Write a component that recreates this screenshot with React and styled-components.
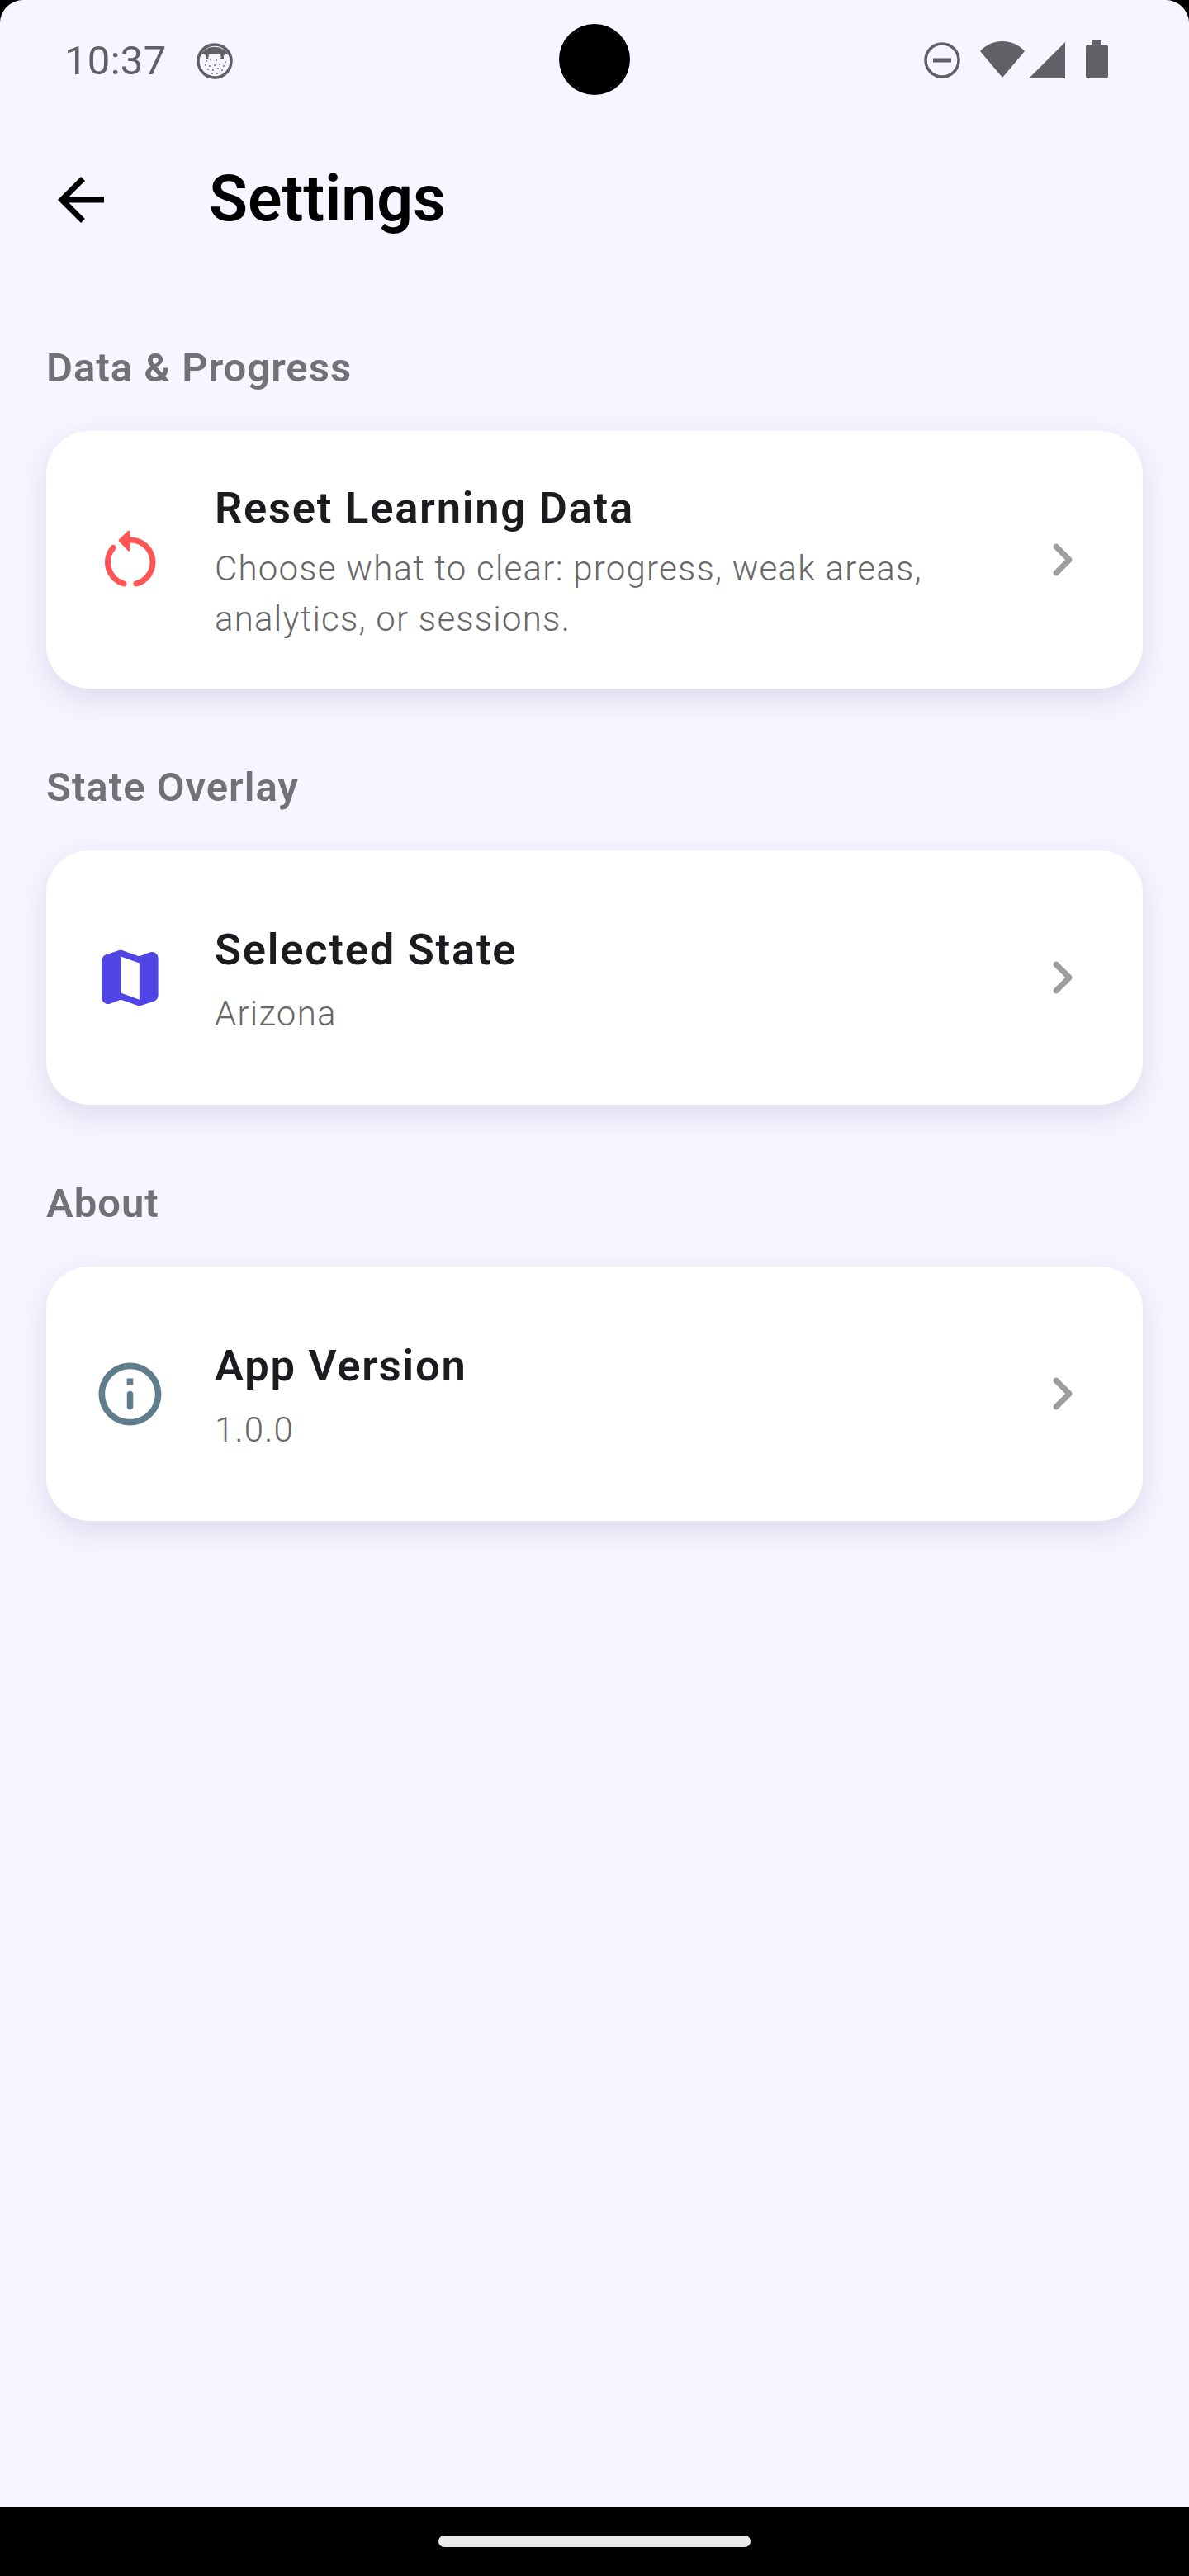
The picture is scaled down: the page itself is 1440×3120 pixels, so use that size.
import React from 'react';
import styled, { createGlobalStyle } from 'styled-components';

const Global = createGlobalStyle`
  html, body { margin: 0; padding: 0; background: #000; }
  * { box-sizing: border-box; }
`;

const Device = styled.div`
  width: 1440px; height: 3120px; background: #000; display: flex; flex-direction: column;
  font-family: Roboto, "Liberation Sans", sans-serif; overflow: hidden;
`;
const Screen = styled.div`
  flex: 1; background: #f7f5ff; border-radius: 28px 28px 0 0; display: flex; flex-direction: column;
`;
const StatusBar = styled.div`
  height: 144px; flex: none; padding: 0 78px; display: grid;
  grid-template-columns: 1fr 86px 1fr; align-items: start; color: #625f66;
`;
const StatusLeft = styled.div`
  display: flex; align-items: center; gap: 36px; height: 48px; margin-top: 50px;
`;
const Clock = styled.span`
  font-size: 49px; font-weight: 400; line-height: 48px; color: #625f66; letter-spacing: 0.3px;
`;
const Camera = styled.div`
  width: 86px; height: 86px; margin-top: 29px; border-radius: 50%; background: #000;
`;
const StatusRight = styled.div`
  display: flex; justify-content: flex-end; align-items: flex-start; margin: 49px 20px 0 0;
`;
const StatusGlyph = styled.svg`
  flex: none; margin-left: ${p => p.$ml || 0}px; margin-top: ${p => p.$mt || 0}px; fill: #625f66;
`;
const AppBar = styled.header`
  height: 196px; flex: none; display: flex; align-items: center; padding-left: 56px;
`;
const BackIcon = styled.svg`
  width: 84px; height: 84px; fill: #000; flex: none;
`;
const Title = styled.h1`
  margin: 0 0 2px 113px; font-size: 77px; font-weight: 600; color: #000; line-height: 90px;
`;
const Content = styled.main`
  flex: 1; padding: 78px 56px 0; display: flex; flex-direction: column; gap: 92px;
`;
const Section = styled.section`
  display: flex; flex-direction: column; gap: 48px;
`;
const SectionLabel = styled.h2`
  margin: 0; height: 56px; line-height: 56px; font-size: 49px; font-weight: 600; color: #727176; letter-spacing: 1px;
`;
const Card = styled.div`
  background: #fff; border-radius: 52px; height: ${p => p.$h}px; padding: 0 56px; display: flex; align-items: center;
  box-shadow: 0 12px 36px rgba(50, 50, 110, 0.13);
`;
const LeadIcon = styled.svg`
  width: 91px; height: 91px; flex: none; fill: ${p => p.$c};
`;
const Body = styled.div`
  flex: 1; min-width: 0; margin-left: 57px; padding-top: 8px; display: flex; flex-direction: column;
`;
const RowTitle = styled.div`
  font-size: 52.5px; font-weight: 600; color: #1c1b1f; letter-spacing: 1.75px; line-height: 62px;
`;
const RowSub = styled.div`
  font-size: 42px; font-weight: 300; color: #686868; line-height: 61px; margin-top: ${p => p.$gap}px; letter-spacing: 1.23px;
`;
const Chevron = styled.svg`
  width: 84px; height: 84px; flex: none; fill: #9e9e9e; margin-left: 28px;
`;
const NavBar = styled.div`
  height: 84px; flex: none; background: #000; display: flex; justify-content: center; padding-top: 35px;
`;
const Pill = styled.div`
  width: 378px; height: 14px; border-radius: 7px; background: #ebebeb;
`;

const Row = ({ h, gap, icon, color, title, sub }) => (
  <Card $h={h}>
    <LeadIcon $c={color} viewBox="0 0 91 91">{icon}</LeadIcon>
    <Body>
      <RowTitle>{title}</RowTitle>
      <RowSub $gap={gap}>{sub}</RowSub>
    </Body>
    <Chevron viewBox="0 0 24 24"><path d="M9.29 6.71c-.39.39-.39 1.02 0 1.41L13.17 12l-3.88 3.88c-.39.39-.39 1.02 0 1.41.39.39 1.02.39 1.41 0l4.59-4.59c.39-.39.39-1.02 0-1.41L10.7 6.7c-.38-.38-1.02-.38-1.41.01z"/></Chevron>
  </Card>
);

const ResetGlyph = (
  <g>
    <path d="M44 21 A27 27 0 0 1 53 74" fill="none" stroke="#ff5555" strokeWidth="7" strokeLinecap="round"/>
    <path d="M38 74 A27 27 0 0 1 25 30.5" fill="none" stroke="#ff5555" strokeWidth="7" strokeLinecap="round"/>
    <path d="M33 21.5 L44 11 L44 33 Z" fill="#ff5555" stroke="#ff5555" strokeWidth="3" strokeLinejoin="round"/>
  </g>
);
const MapGlyph = (
  <g transform="scale(3.7917)"><path fillRule="evenodd" d="M14.65 4.98l-5-1.75c-.42-.15-.88-.15-1.3-.01L4.36 4.56C3.55 4.84 3 5.6 3 6.46v11.85c0 1.41 1.41 2.37 2.72 1.86l2.93-1.14c.22-.09.47-.09.69-.01l5 1.75c.42.15.88.15 1.3.01l3.99-1.34c.81-.27 1.36-1.04 1.36-1.9V5.69c0-1.41-1.41-2.37-2.72-1.86l-2.93 1.14c-.22.08-.46.09-.69.01zM15 18.89l-6-2.11V5.11l6 2.11v11.67z"/></g>
);
const InfoGlyph = (
  <g transform="scale(3.7917)"><path d="M11 7h2v2h-2zm1 10c.55 0 1-.45 1-1v-4c0-.55-.45-1-1-1s-1 .45-1 1v4c0 .55.45 1 1 1zm0-15C6.48 2 2 6.48 2 12s4.48 10 10 10 10-4.48 10-10S17.52 2 12 2zm0 18c-4.41 0-8-3.59-8-8s3.59-8 8-8 8 3.59 8 8-3.59 8-8 8z"/></g>
);

const dots = [[12,22],[17,20],[24,21],[30,19],[35,23],[11,27],[16,28],[22,27],[28,26],[33,28],[14,32],[20,33],[26,31],[31,33],[19,37],[25,37]];

export default function App() {
  return (
    <Device>
      <Global />
      <Screen>
        <StatusBar>
          <StatusLeft>
            <Clock>10:37</Clock>
            <svg width="44" height="44" viewBox="0 0 44 44">
              <circle cx="22" cy="22" r="20" fill="#f7f5ff" stroke="#625f66" strokeWidth="3.5"/>
              <path d="M4 16 A20 20 0 0 1 40 16 L36 13 L33 15 L33 20 L30 20 L29 14 H15 L14 20 L11 20 L11 15 L8 13 Z" fill="#625f66"/>
              {dots.map(([x, y], i) => <circle key={i} cx={x} cy={y} r="0.9" fill="#625f66"/>)}
            </svg>
          </StatusLeft>
          <Camera />
          <StatusRight>
            <StatusGlyph width="44" height="46" viewBox="0 0 44 46" $mt={2}>
              <circle cx="22" cy="22" r="20" fill="none" stroke="#625f66" strokeWidth="3.5"/>
              <rect x="11" y="19.5" width="22" height="5"/>
            </StatusGlyph>
            <StatusGlyph width="54" height="46" viewBox="0 0 54 46" $ml={24} $mt={1}>
              <path d="M0 12 C14 -4 40 -4 54 12 L27 44 Z"/>
            </StatusGlyph>
            <StatusGlyph width="44" height="46" viewBox="0 0 44 46" $ml={5} $mt={2}>
              <path d="M44 0 V44 H0 Z"/>
            </StatusGlyph>
            <StatusGlyph width="27" height="46" viewBox="0 0 27 46" $ml={25}>
              <path d="M8 0 H19 V5 H24 A3 3 0 0 1 27 8 V43 A3 3 0 0 1 24 46 H3 A3 3 0 0 1 0 43 V8 A3 3 0 0 1 3 5 H8 Z"/>
            </StatusGlyph>
          </StatusRight>
        </StatusBar>
        <AppBar>
          <BackIcon viewBox="0 0 24 24"><path d="M20 11H7.83l5.59-5.59L12 4l-8 8 8 8 1.41-1.41L7.83 13H20v-2z"/></BackIcon>
          <Title>Settings</Title>
        </AppBar>
        <Content>
          <Section>
            <SectionLabel>Data &amp; Progress</SectionLabel>
            <Row h={312} gap={12} color="#ff5555" icon={ResetGlyph} title="Reset Learning Data" sub="Choose what to clear: progress, weak areas, analytics, or sessions." />
          </Section>
          <Section>
            <SectionLabel>State Overlay</SectionLabel>
            <Row h={308} gap={16} color="#4f46e5" icon={MapGlyph} title="Selected State" sub="Arizona" />
          </Section>
          <Section>
            <SectionLabel>About</SectionLabel>
            <Row h={308} gap={16} color="#607d8b" icon={InfoGlyph} title="App Version" sub="1.0.0" />
          </Section>
        </Content>
      </Screen>
      <NavBar><Pill /></NavBar>
    </Device>
  );
}
